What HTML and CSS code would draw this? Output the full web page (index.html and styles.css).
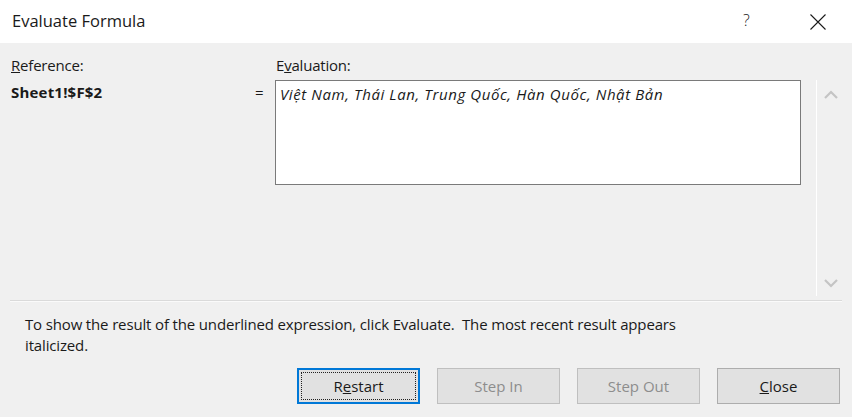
FILE: index.html
```html
<!DOCTYPE html>
<html>
<head>
<meta charset="utf-8">
<title>Evaluate Formula</title>
<link rel="stylesheet" href="styles.css">
</head>
<body>
<div class="dialog">
  <div class="titlebar">
    <div class="title">Evaluate Formula</div>
    <div class="help">?</div>
    <div class="close-x">
      <svg width="16" height="16" viewBox="0 0 16 16"><path d="M0.5 0.5 L15.5 15.5 M15.5 0.5 L0.5 15.5" stroke="#1a1a1a" stroke-width="1.1" fill="none"/></svg>
    </div>
  </div>
  <div class="main">
    <div class="label ref-label"><u>R</u>eference:</div>
    <div class="label eval-label">E<u>v</u>aluation:</div>
    <div class="ref-value">Sheet1!$F$2</div>
    <div class="equals">=</div>
    <div class="evalbox">Việt Nam, Thái Lan, Trung Quốc, Hàn Quốc, Nhật Bản</div>
    <div class="scrollbar">
      <svg class="chev" width="14" height="9" viewBox="0 0 14 9"><path d="M1 8 L7 2 L13 8" stroke="#c4c4c4" stroke-width="2.2" fill="none"/></svg>
      <svg class="chev" width="14" height="9" viewBox="0 0 14 9"><path d="M1 1 L7 7 L13 1" stroke="#c4c4c4" stroke-width="2.2" fill="none"/></svg>
    </div>
  </div>
  <div class="separator"></div>
  <div class="hint">To show the result of the underlined expression, click Evaluate.&nbsp; The most recent result appears<br>italicized.</div>
  <div class="buttons">
    <button class="btn default"><span class="focus">R<u>e</u>start</span></button>
    <button class="btn disabled">Step In</button>
    <button class="btn disabled">Step Out</button>
    <button class="btn"><u>C</u>lose</button>
  </div>
</div>
</body>
</html>
```
FILE: styles.css
```css
* { box-sizing: border-box; }
html, body { margin: 0; padding: 0; }
body {
  width: 852px;
  height: 417px;
  background: #f0f0f0;
  font-family: "Open Sans", "Noto Sans", sans-serif;
  font-size: 15px;
  color: #1a1a1a;
  overflow: hidden;
}
.dialog { width: 852px; height: 417px; }
.titlebar {
  height: 43px;
  background: #ffffff;
  display: flex;
  align-items: center;
}
.title {
  flex: 1;
  padding-left: 12px;
  font-size: 16.5px;
  padding-bottom: 2px;
}
.help {
  width: 20px;
  font-size: 16px;
  font-weight: 300;
  margin-right: 47px;
  padding-bottom: 4px;
}
.close-x {
  width: 16px;
  height: 16px;
  margin-right: 26px;
  display: flex;
}
.main {
  display: grid;
  grid-template-columns: 244px 20px 526px 15px 28px;
  grid-template-rows: 37px 216px;
  padding-left: 11px;
}
.label { line-height: 20px; margin-top: 12px; letter-spacing: -0.2px; }
.ref-label { grid-column: 1; grid-row: 1; }
.eval-label { grid-column: 3; grid-row: 1; padding-left: 1px; }
.ref-value {
  grid-column: 1; grid-row: 2;
  font-weight: bold;
  line-height: 20px;
  margin-top: 2px;
  letter-spacing: 0.2px;
}
.equals {
  grid-column: 2; grid-row: 2;
  line-height: 20px;
  margin-top: 2px;
}
.evalbox {
  grid-column: 3; grid-row: 2;
  height: 105px;
  background: #ffffff;
  border: 1px solid #7a7a7a;
  font-style: italic;
  line-height: 20px;
  padding: 3px 4px;
  letter-spacing: 0.6px;
}
.scrollbar {
  grid-column: 5; grid-row: 2;
  border-left: 1px solid #ffffff;
  background: #f0f0f0;
  display: flex;
  flex-direction: column;
  justify-content: space-between;
  align-items: center;
  padding: 10px 0 8px 0;
}
.separator {
  margin: 4px 10px 0 10px;
  height: 2px;
  border-top: 1px solid #dadada;
  border-bottom: 1px solid #fafafa;
}
.hint {
  padding-left: 25px;
  margin-top: 12px;
  line-height: 21px;
  letter-spacing: -0.15px;
}
.buttons {
  display: flex;
  justify-content: flex-end;
  gap: 17px;
  padding-right: 12px;
  margin-top: 12px;
}
.btn {
  width: 123px;
  height: 36px;
  background: #e1e1e1;
  border: 1px solid #adadad;
  font-family: inherit;
  font-size: 15px;
  color: #1a1a1a;
  padding: 0;
  margin: 0;
}
.btn.default {
  border: 2px solid #0078d7;
  padding: 2px;
  display: flex;
}
.focus {
  flex: 1;
  border: 1px dotted #222;
  display: flex;
  align-items: center;
  justify-content: center;
}
.btn.disabled {
  color: #8d8d8d;
  border-color: #bfbfbf;
  background: #e1e1e1;
}
```
